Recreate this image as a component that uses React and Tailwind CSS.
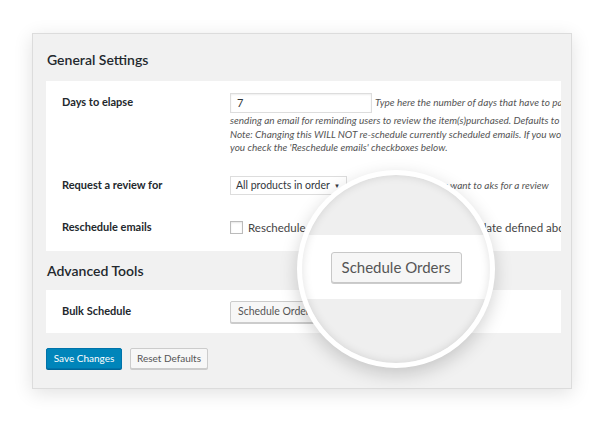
import React from "react";

const F = { fontFamily: 'Lato, "Open Sans", sans-serif' };

export default function App() {
  return (
    <div className="w-[603px] h-[422px] bg-white overflow-hidden relative" style={F}>
      <div className="pt-[33px] pl-[32px]">
        <div className="w-[540px] h-[356px] bg-[#f1f1f1] border border-[#dcdcdc] shadow-[0_4px_18px_rgba(0,0,0,0.12)] pl-[13px] pr-[10px] pt-[15px]">
          <h2 className="text-[14px] leading-[22px] font-semibold text-[#23282d] pl-px">General Settings</h2>
          <div className="mt-[10px] bg-white h-[170px] overflow-hidden relative">
            <div className="flex pt-[11px]">
              <div className="w-[184px] shrink-0 pl-[16px] pt-[3px] text-[11px] font-bold text-[#23282d] leading-[14px]">Days to elapse</div>
              <div className="text-[10px] italic text-[#555] whitespace-nowrap leading-[13.5px]">
                <div className="flex items-center h-[22px]">
                  <div className="w-[142px] h-[20px] border border-[#ddd] shadow-[inset_0_1px_2px_rgba(0,0,0,0.07)] text-[11px] not-italic text-[#32373c] pl-[6px] leading-[18px]">7</div>
                  <span className="ml-[3px]">Type here the number of days that have to pass before</span>
                </div>
                <div>sending an email for reminding users to review the item(s)purchased. Defaults to 7.</div>
                <div>Note: Changing this WILL NOT re-schedule currently scheduled emails. If you would like to reschedule</div>
                <div>you check the 'Reschedule emails' checkboxes below.</div>
              </div>
            </div>
            <div className="flex items-center mt-[21px] h-[20px]">
              <div className="w-[184px] shrink-0 pl-[16px] text-[11px] font-bold text-[#23282d]">Request a review for</div>
              <div className="flex items-center whitespace-nowrap">
                <div className="w-[117px] h-[19px] border border-[#ddd] flex items-center justify-between pl-[5px] pr-[6px] text-[10.5px] text-[#32373c]">
                  <span>All products in order</span>
                  <span className="text-[6px]">▼</span>
                </div>
                <span className="ml-[4px] text-[10px] italic text-[#555]">Select the products you want to aks for a review</span>
              </div>
            </div>
            <div className="flex items-center mt-[22px] h-[20px]">
              <div className="w-[184px] shrink-0 pl-[16px] text-[11px] font-bold text-[#23282d]">Reschedule emails</div>
              <div className="flex items-center whitespace-nowrap">
                <div className="w-[13px] h-[13px] border border-[#bbb] bg-white shadow-[inset_0_1px_2px_rgba(0,0,0,0.1)]"></div>
                <span className="ml-[5px] text-[11.5px] text-[#444]">Reschedule all scheduled emails with the new date defined above</span>
              </div>
            </div>
          </div>
          <h2 className="mt-[9px] text-[14px] leading-[22px] font-semibold text-[#23282d] pl-px">Advanced Tools</h2>
          <div className="mt-[8px] bg-white h-[43px] flex items-center">
            <div className="w-[184px] shrink-0 pl-[16px] text-[11px] font-bold text-[#23282d]">Bulk Schedule</div>
            <div className="h-[22px] px-[7px] border border-[#ccc] bg-[#f7f7f7] rounded-[2px] shadow-[0_1px_0_#ccc] text-[10.5px] text-[#555] flex items-center">Schedule Orders</div>
          </div>
          <div className="flex mt-[15px] gap-[8px]">
            <div className="w-[76px] h-[21px] bg-[#0085ba] border border-[#0073aa] rounded-[2px] shadow-[0_1px_0_#006799] text-white text-[10px] flex items-center justify-center">Save Changes</div>
            <div className="w-[78px] h-[21px] bg-[#f7f7f7] border border-[#ccc] rounded-[2px] shadow-[0_1px_0_#ccc] text-[#555] text-[10px] flex items-center justify-center">Reset Defaults</div>
          </div>
        </div>
      </div>

      <div className="absolute left-[297px] top-[170px] w-[198px] h-[198px] rounded-full border-[5px] border-white shadow-[0_6px_18px_rgba(0,0,0,0.18)] overflow-hidden bg-[#efefef]">
        <div className="absolute inset-0 rounded-full shadow-[inset_0_0_10px_rgba(0,0,0,0.12)] z-10"></div>
        <div className="mt-[60px] h-[64px] bg-white flex items-center justify-center">
          <div className="w-[131px] h-[31px] border border-[#c8c8c8] bg-[#f6f6f6] rounded-[3px] shadow-[0_1px_0_#ccc] text-[15px] text-[#555] flex items-center justify-center">Schedule Orders</div>
        </div>
      </div>
    </div>
  );
}
